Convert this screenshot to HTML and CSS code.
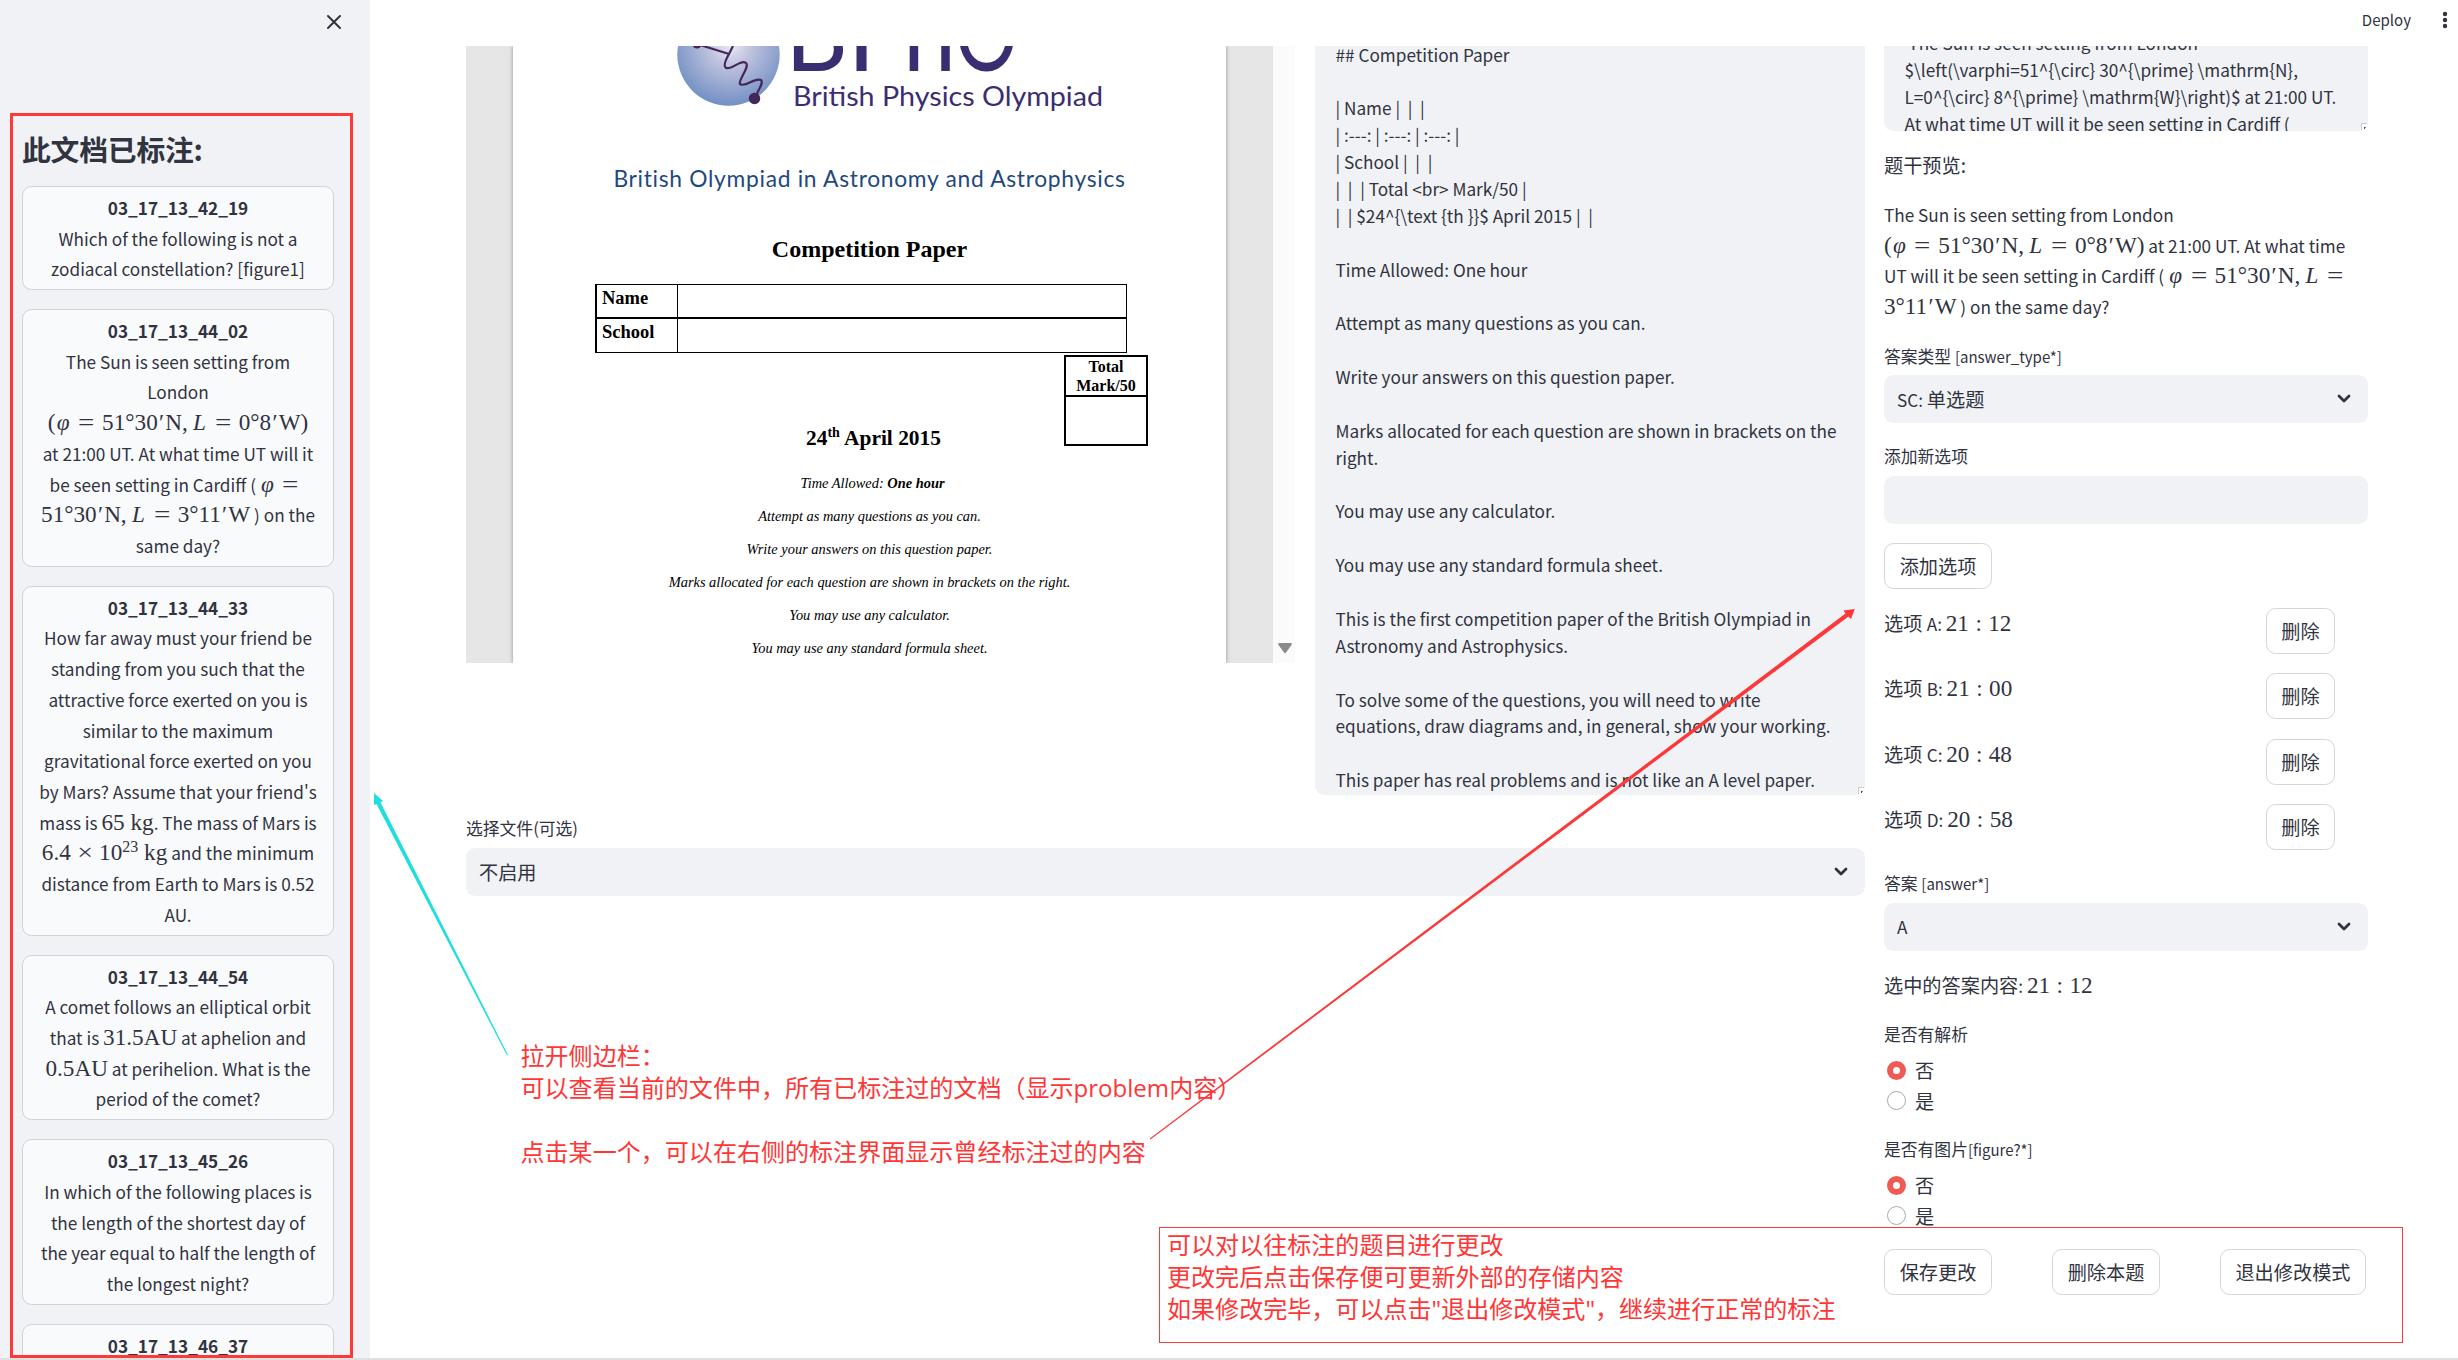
FILE: index.html
```html
<!DOCTYPE html>
<html lang="zh-CN">
<head>
<meta charset="utf-8">
<title>标注工具</title>
<link rel="stylesheet" href="styles.css">
</head>
<body>
<div class="app">
  <aside class="sidebar">
    <div class="sidebar-top">
      <svg class="close" width="16" height="16" viewBox="0 0 16 16"><path d="M2 2L14 14M14 2L2 14" fill="none" stroke="#31333f" stroke-width="2" stroke-linecap="round"/></svg>
    </div>
    <h2>此文档已标注:</h2>
    <div class="cards">
      <button class="card"><b>03_17_13_42_19</b><br>Which of the following is not a<br>zodiacal constellation? [figure1]</button>
      <button class="card"><b>03_17_13_44_02</b><br>The Sun is seen setting from<br>London<br><span class="m">(<i class="phi">φ</i><span class="r">=</span>51°30<span class="pr">′</span>N,<span class="c"></span><i class="L">L</i><span class="r">=</span>0°8<span class="pr">′</span>W)</span><br>at 21:00 UT. At what time UT will it<br>be seen setting in Cardiff ( <span class="m"><i class="phi">φ</i><span class="r">=</span></span><br><span class="m">51°30<span class="pr">′</span>N,<span class="c"></span><i class="L">L</i><span class="r">=</span>3°11<span class="pr">′</span>W</span> ) on the<br>same day?</button>
      <button class="card"><b>03_17_13_44_33</b><br>How far away must your friend be<br>standing from you such that the<br>attractive force exerted on you is<br>similar to the maximum<br>gravitational force exerted on you<br>by Mars? Assume that your friend's<br>mass is <span class="m">65 kg</span>. The mass of Mars is<br><span class="m">6.4<span class="x">×</span>10<sup>23</sup> kg</span> and the minimum<br>distance from Earth to Mars is 0.52<br>AU.</button>
      <button class="card"><b>03_17_13_44_54</b><br>A comet follows an elliptical orbit<br>that is <span class="m">31.5AU</span> at aphelion and<br><span class="m">0.5AU</span> at perihelion. What is the<br>period of the comet?</button>
      <button class="card"><b>03_17_13_45_26</b><br>In which of the following places is<br>the length of the shortest day of<br>the year equal to half the length of<br>the longest night?</button>
      <button class="card"><b>03_17_13_46_37</b><br>&nbsp;</button>
    </div>
  </aside>

  <main class="main">
    <header class="toolbar">
      <span class="deploy">Deploy</span>
      <svg width="6" height="18" viewBox="0 0 6 18" fill="#31333f"><circle cx="3" cy="3" r="2.2"/><circle cx="3" cy="9" r="2.2"/><circle cx="3" cy="15" r="2.2"/></svg>
    </header>
    <div class="content">
      <section class="left">
        <div class="viewers">
          <div class="pdf">
            <div class="page">
              <svg class="logo" width="440" height="75" viewBox="670 46 440 75">
                <defs><radialGradient id="ball" cx=".52" cy=".4" r=".6"><stop offset="0" stop-color="#eceaf4"/><stop offset=".35" stop-color="#bfc2de"/><stop offset="1" stop-color="#7290c4"/></radialGradient></defs>
                <circle cx="728.5" cy="54.5" r="51.2" fill="url(#ball)"/>
                <path d="M697 44L729 54L733 46M729 54C725 61 723 66 726 68C732 70 741 59 746 63C750 67 738 80 740 84C746 88 754 77 761 80C764 83 758 90 755 98" fill="none" stroke="#43265a" stroke-width="2.2"/>
                <circle cx="697" cy="44" r="4.500" fill="#43265a"/><circle cx="754.500" cy="98.500" r="5.700" fill="#43265a"/>
                <g class="big"><text x="785" y="71" textLength="63" lengthAdjust="spacingAndGlyphs">B</text><text x="847" y="71">P</text><text x="903" y="71" textLength="53" lengthAdjust="spacingAndGlyphs">h</text><text x="955" y="71" textLength="63" lengthAdjust="spacingAndGlyphs">O</text></g>
                <text class="sub" x="793" y="105.500" textLength="310" lengthAdjust="spacingAndGlyphs">British Physics Olympiad</text>
              </svg>
              <div class="boaa">British Olympiad in Astronomy and Astrophysics</div>
              <div class="cp">Competition Paper</div>
              <div class="names"><div>Name</div><div></div><div>School</div><div></div></div>
              <div class="mark"><div>Total<br>Mark/50</div><div></div></div>
              <div class="date">24<sup>th</sup> April 2015</div>
              <div class="notes">
                <p class="time">Time Allowed: <b>One hour</b></p>
                <p>Attempt as many questions as you can.</p>
                <p>Write your answers on this question paper.</p>
                <p>Marks allocated for each question are shown in brackets on the right.</p>
                <p>You may use any calculator.</p>
                <p>You may use any standard formula sheet.</p>
              </div>
            </div>
            <div class="track"><svg width="16" height="12" viewBox="0 0 16 12"><path d="M2 1H14Q15.500 1 14.500 3L9 10.500Q8 11.500 7 10.500L1.500 3Q.5 1 2 1Z" fill="#8a8a8a"/></svg></div>
          </div>
          <div class="area">
<pre>## Competition Paper

| Name |  |  |
| :---: | :---: | :---: |
| School |  |  |
|  |  | Total &lt;br&gt; Mark/50 |
|  | $24^{\text {th }}$ April 2015 |  |

Time Allowed: One hour

Attempt as many questions as you can.

Write your answers on this question paper.

Marks allocated for each question are shown in brackets on the
right.

You may use any calculator.

You may use any standard formula sheet.

This is the first competition paper of the British Olympiad in
Astronomy and Astrophysics.

To solve some of the questions, you will need to write
equations, draw diagrams and, in general, show your working.

This paper has real problems and is not like an A level paper.</pre>
            <i class="grip"></i>
          </div>
        </div>
        <div class="label file-label">选择文件(可选)</div>
        <div class="select"><span>不启用</span><svg class="chev" width="14" height="10" viewBox="0 0 14 10"><path d="M2 2L7 7L12 2" fill="none" stroke="#31333f" stroke-width="2.800" stroke-linecap="round" stroke-linejoin="round"/></svg></div>
      </section>

      <section class="right">
        <div class="area stem">
<pre> The Sun is seen setting from London
$\left(\varphi=51^{\circ} 30^{\prime} \mathrm{N},
L=0^{\circ} 8^{\prime} \mathrm{W}\right)$ at 21:00 UT.
At what time UT will it be seen setting in Cardiff (</pre>
          <i class="grip"></i>
        </div>
        <div class="text preview-title">题干预览:</div>
        <p class="preview">The Sun is seen setting from London<br><span class="m">(<i class="phi">φ</i><span class="r">=</span>51°30<span class="pr">′</span>N,<span class="c"></span><i class="L">L</i><span class="r">=</span>0°8<span class="pr">′</span>W)</span> at 21:00 UT. At what time<br>UT will it be seen setting in Cardiff ( <span class="m"><i class="phi">φ</i><span class="r">=</span>51°30<span class="pr">′</span>N,<span class="c"></span><i class="L">L</i><span class="r">=</span></span><br><span class="m">3°11<span class="pr">′</span>W</span> ) on the same day?</p>
        <div class="label l-type">答案类型 <span class="e">[answer_type*]</span></div>
        <div class="select"><span><span class="e">SC: </span>单选题</span><svg class="chev" width="14" height="10" viewBox="0 0 14 10"><path d="M2 2L7 7L12 2" fill="none" stroke="#31333f" stroke-width="2.800" stroke-linecap="round" stroke-linejoin="round"/></svg></div>
        <div class="label l-new">添加新选项</div>
        <div class="select"></div>
        <button class="btn add">添加选项</button>
        <div class="options">
          <div class="option"><span>选项 <span class="e">A: </span><span class="m">21<span class="k">:</span>12</span></span><button class="btn del">删除</button></div>
          <div class="option"><span>选项 <span class="e">B: </span><span class="m">21<span class="k">:</span>00</span></span><button class="btn del">删除</button></div>
          <div class="option"><span>选项 <span class="e">C: </span><span class="m">20<span class="k">:</span>48</span></span><button class="btn del">删除</button></div>
          <div class="option"><span>选项 <span class="e">D: </span><span class="m">20<span class="k">:</span>58</span></span><button class="btn del">删除</button></div>
        </div>
        <div class="label l-ans">答案 <span class="e">[answer*]</span></div>
        <div class="select"><span class="e">A</span><svg class="chev" width="14" height="10" viewBox="0 0 14 10"><path d="M2 2L7 7L12 2" fill="none" stroke="#31333f" stroke-width="2.800" stroke-linecap="round" stroke-linejoin="round"/></svg></div>
        <div class="text chosen">选中的答案内容<span class="e">: </span><span class="m">21<span class="k">:</span>12</span></div>
        <div class="label l-expl">是否有解析</div>
        <div class="radio on"><i></i>否</div>
        <div class="radio"><i></i>是</div>
        <div class="label l-fig">是否有图片<span class="e">[figure?*]</span></div>
        <div class="radio on"><i></i>否</div>
        <div class="radio"><i></i>是</div>
        <div class="actions"><button class="btn">保存更改</button><button class="btn">删除本题</button><button class="btn wide">退出修改模式</button></div>
      </section>
    </div>
  </main>
</div>
<div class="edge"></div>

<div class="frame frame-side"></div>
<div class="frame frame-actions note">可以对以往标注的题目进行更改<br>更改完后点击保存便可更新外部的存储内容<br>如果修改完毕，可以点击"退出修改模式"，继续进行正常的标注</div>
<div class="note note-side">拉开侧边栏：<br>可以查看当前的文件中，所有已标注过的文档（显示problem内容）<br><br>点击某一个，可以在右侧的标注界面显示曾经标注过的内容</div>
<svg class="arrows" width="2458" height="1360" viewBox="0 0 2458 1360">
  <path d="M374 793L383 801L380.500 802.500L508 1055L507 1055.500L376.500 804L374 805Z" fill="#1edede"/>
  <path d="M1854.800 609L1851 619L1848.500 616.500L1150.400 1139.500L1149.800 1138.500L1845.500 613.500L1843.500 610.500Z" fill="#fc3838"/>
</svg>
</body>
</html>
```
FILE: styles.css
```css
* { box-sizing: border-box; }
body {
  margin: 0; width: 2458px; height: 1360px; overflow: hidden; position: relative;
  background: #fff; color: #31333f;
  font-family: "Noto Sans CJK SC", "Noto Sans", sans-serif; font-size: 19.2px;
}
button { font: inherit; color: inherit; margin: 0; }
.app { display: flex; height: 1360px; }

/* sidebar */
.sidebar { width: 370px; flex: none; background: #f0f2f6; padding: 0 36px 0 22px; overflow: hidden; }
.sidebar-top { height: 129px; display: flex; justify-content: flex-end; padding: 14px 0 0; margin-right: -8px; }
h2 { margin: 0; font-size: 28.8px; line-height: 40px; height: 57px; font-weight: 700; white-space: nowrap; letter-spacing: -.2px; }
.cards { display: flex; flex-direction: column; gap: 19.2px; }
.card {
  display: block; width: 312px; padding: 5.9px 0 3.9px; border: 1px solid #d0d2d7; border-radius: 9.6px;
  background: #f9fafc; font-size: 17.2px; line-height: 30.72px; text-align: center; white-space: nowrap;
}
.card b { font-weight: 700; }

/* formulas */
.m { font-family: "Liberation Serif", serif; font-size: 23.2px; line-height: 0; white-space: nowrap; }
.m > * { line-height: 0; }
.m sup { font-size: 16px; vertical-align: 8px; }
.phi { display: inline-block; width: .654em; text-align: center; }
.L { display: inline-block; width: .68em; text-align: center; }
.r { display: inline-block; width: .8em; margin: 0 .278em; text-align: center; transform: scaleX(1.25); }
.x { display: inline-block; width: .778em; margin: 0 .222em; text-align: center; transform: scaleX(1.2); }
.k { display: inline-block; width: .278em; margin: 0 .278em; text-align: center; }
.c { display: inline-block; width: .167em; }
.pr { display: inline-block; width: .32em; text-align: center; }

/* main */
.main { flex: 1; min-width: 0; }
.toolbar { height: 46px; display: flex; justify-content: flex-end; align-items: center; padding: 0 10px 6px 0; gap: 31px; }
.deploy { font-size: 15.04px; line-height: 24px; }
.content { display: flex; padding-left: 96px; gap: 19px; }
.left { width: 1399px; }
.viewers { display: flex; justify-content: space-between; height: 749px; }
.area { position: relative; width: 550px; height: 749px; overflow: hidden; background: #f0f2f6; border-radius: 0 0 9.6px 9.6px; }
.area pre { margin: -4.500px 0 0 20.500px; font: 17.2px/26.88px "Noto Sans CJK SC", sans-serif; }
.grip { position: absolute; right: 1px; bottom: 1px; width: 6px; height: 7px; background: #fff; border: solid #ccc; border-width: 1px 0 0 1px; border-radius: 0 0 4px 0; }
.grip::after { content: ""; position: absolute; right: 1px; bottom: 1px; width: 2px; height: 2px; background: #444; }

.pdf { width: 829px; height: 617px; padding-left: 47px; display: flex; background: #e6e6e6; overflow: hidden; }
.page { width: 713px; background: #fff; box-shadow: 0 0 4px rgba(0,0,0,.4); color: #000; font-family: "Liberation Serif", serif; }
.logo { display: block; margin-left: 157px; }
.big { font: 104px Lato, sans-serif; fill: #3b2d72; }
.sub { font: 27px Lato, sans-serif; fill: #3b2d72; }
.boaa { margin-top: 41px; text-align: center; font: 22.8px/32px Lato, sans-serif; color: #1f497d; letter-spacing: .7px; }
.cp { margin-top: 38px; text-align: center; font-weight: 700; font-size: 24px; line-height: 34px; }
.names { margin: 18px 0 0 82px; width: 532px; height: 69px; display: grid; grid-template: 32px 33px / 80px 448px; gap: 1px; row-gap: 2px; background: #000; border: solid #000; border-width: 1px 1px 1px 2px; font-weight: 700; font-size: 18.500px; line-height: 26px; }
.names div { background: #fff; padding-left: 5px; }
.mark { margin: 2px 0 0 551px; width: 84px; height: 91px; border: 2px solid #000; display: grid; grid-template-rows: 40px 1fr; text-align: center; font-weight: 700; font-size: 16px; line-height: 19px; }
.mark div:first-child { border-bottom: 2px solid #000; }
.date { margin: -23px 0 0 8px; text-align: center; font-weight: 700; font-size: 21.4px; line-height: 30px; }
.date sup { font-size: 14px; line-height: 0; }
.notes { margin-top: 14px; text-align: center; font-style: italic; font-size: 14.4px; line-height: 33px; }
.notes p { margin: 0; }
.notes .time { padding-left: 6px; }
.track { flex: 1; margin-left: 47px; background: #fbfbfb; display: flex; align-items: flex-end; padding: 0 0 9px 4px; }

.label { font-size: 16.8px; line-height: 24px; white-space: nowrap; }
.text { line-height: 30px; white-space: nowrap; }
.e { font-size: .895em; line-height: 0; }
.file-label { margin: 21px 0 8px; }
.select { height: 48px; border-radius: 9.6px; background: #f0f2f6; display: flex; align-items: center; justify-content: space-between; padding: 0 17.500px 0 13px; }
.select > span { line-height: 28px; }
.select > .e { font-size: 17.2px; }

.right { width: 484px; }
.stem { width: 484px; height: 85px; }
.stem pre { margin-top: -16px; }
.preview-title { margin-top: 18.500px; }
.preview { margin: 20.500px 0 0; font-size: 17.2px; line-height: 30.72px; white-space: nowrap; }
.l-type { margin: 21px 0 7px; }
.l-new { margin: 21px 0 8px; }
.btn { display: block; height: 46px; width: 108px; padding: 0; border: 1px solid #d6d6d9; border-radius: 9.6px; background: #fff; line-height: 28px; white-space: nowrap; }
.add { margin-top: 19px; }
.options { margin-top: 19.300px; display: grid; gap: 19.300px; }
.option { display: flex; justify-content: space-between; padding-right: 33px; line-height: 30px; white-space: nowrap; }
.option .del { width: 69px; }
.l-ans { margin: 21px 0 8px; }
.chosen { margin-top: 19px; }
.l-expl { margin: 22px 0 9px; }
.radio { display: flex; align-items: center; gap: 9px; padding-left: 3px; height: 30.500px; line-height: 28px; }
.radio i { width: 19px; height: 19px; border: 1px solid #a9aab0; border-radius: 50%; }
.radio.on i { border: 6px solid #ef5a53; }
.l-fig { margin: 21px 0 9px; }
.actions { display: flex; gap: 60px; margin-top: 18px; }
.actions .wide { width: 146px; }
.edge { position: absolute; left: 0; bottom: 0; width: 2458px; height: 2px; background: #e0e0e1; }

/* annotations over the page */
.frame { position: absolute; border: 3px solid #ff3838; }
.frame-side { left: 10px; top: 113px; width: 343px; height: 1245px; }
.frame-actions { left: 1159px; top: 1227px; width: 1244px; height: 116px; border-width: 1px; padding: 1px 7px; }
.note { color: #ff3636; font: 24.05px/32px "Open Sans", "Noto Sans CJK SC", sans-serif; white-space: nowrap; }
.note-side { position: absolute; left: 520.500px; top: 1040px; }
.arrows { position: absolute; left: 0; top: 0; }
```
